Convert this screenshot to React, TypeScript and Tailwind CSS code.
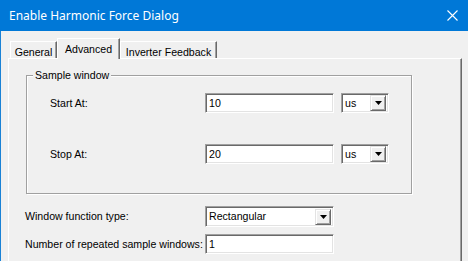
const sunken =
  'border-t border-l border-t-[#a0a0a0] border-l-[#a0a0a0] border-b border-r border-b-white border-r-white shadow-[inset_1px_1px_0_#696969,inset_-1px_-1px_0_#e3e3e3] bg-white';

function TextBox({ value, className = '' }: { value: string; className?: string }) {
  return (
    <div className={`flex h-[20px] w-[129px] items-center pl-[3px] leading-[13px] ${sunken} ${className}`}>
      {value}
    </div>
  );
}

function DropButton() {
  return (
    <div className="ml-auto mr-[2px] flex h-[16px] w-[16px] items-center justify-center border border-t-[#e3e3e3] border-l-[#e3e3e3] border-b-[#696969] border-r-[#696969] bg-[#f0f0f0] shadow-[inset_1px_1px_0_#fff,inset_-1px_-1px_0_#a0a0a0]">
      <svg width="7" height="4" viewBox="0 0 7 4">
        <path d="M0 0h7L3.5 4z" fill="#000" />
      </svg>
    </div>
  );
}

function Combo({ value, width, height = 20 }: { value: string; width: number; height?: number }) {
  return (
    <div
      className={`flex items-center pl-[3px] leading-[13px] ${sunken} ${width === 48 ? 'w-[48px]' : 'w-[129px]'} ${height === 21 ? 'h-[21px]' : 'h-[20px]'}`}
    >
      <span>{value}</span>
      <DropButton />
    </div>
  );
}

function Tab({ label, active, width }: { label: string; active?: boolean; width: string }) {
  return (
    <div
      className={`flex items-start justify-center whitespace-nowrap border-t border-l border-t-white border-l-white border-r border-r-[#696969] shadow-[inset_-1px_0_0_#a0a0a0] ${width} ${
        active
          ? 'relative z-10 -mb-px h-[21px] bg-[#f0f0f0] pt-[4px]'
          : 'h-[17px] pt-[4px]'
      }`}
    >
      {label}
    </div>
  );
}

export default function App() {
  return (
    <div className="h-[261px] w-[468px] overflow-hidden bg-[#f0f0f0] font-['Liberation_Sans',Arial,sans-serif] text-[10.6px] leading-[13px] text-black">
      {/* Title bar */}
      <div className="flex h-[31px] items-center justify-between bg-[#0078d7] pl-[9px] pr-[9px] font-['Noto_Sans',sans-serif] text-[12px] text-white">
        <span>Enable Harmonic Force Dialog</span>
        <svg width="11" height="11" viewBox="0 0 11 11" className="mr-[1px]">
          <path d="M0.5 0.5l10 10M10.5 0.5l-10 10" stroke="#fff" strokeWidth="1.1" />
        </svg>
      </div>

      <div className="h-[230px] border-l border-l-[#1a82d6] pl-[7px] pt-[7px]">
        {/* Tabs */}
        <div className="flex h-[20px] items-end pl-[2px]">
          <Tab label="General" width="w-[47px]" />
          <Tab label="Advanced" width="w-[63px]" active />
          <Tab label="Inverter Feedback" width="w-[97px]" />
        </div>

        {/* Tab page */}
        <div className="h-[210px] w-[454px] border-t border-l border-t-white border-l-white border-r border-r-[#696969] pl-[17px] pt-[16px] shadow-[inset_-1px_0_0_#a0a0a0]">
          <div className="relative h-[119px] w-[386px] border border-[#a0a0a0] pl-[23px] pt-[17px] shadow-[inset_1px_1px_0_#fff,1px_1px_0_#fff]">
            <span className="absolute left-[6px] top-[-7px] bg-[#f0f0f0] px-[2px]">Sample window</span>
            <div className="flex items-center">
              <span className="w-[155px]">Start At:</span>
              <TextBox value="10" />
              <div className="ml-[7px]">
                <Combo value="us" width={48} />
              </div>
            </div>
            <div className="mt-[31px] flex items-center">
              <span className="w-[155px]">Stop At:</span>
              <TextBox value="20" />
              <div className="ml-[7px]">
                <Combo value="us" width={48} />
              </div>
            </div>
          </div>

          <div className="-ml-px mt-[12px] flex items-center">
            <span className="w-[180px] whitespace-nowrap">Window function type:</span>
            <Combo value="Rectangular" width={129} height={21} />
          </div>
          <div className="-ml-px mt-[7px] flex items-center">
            <span className="w-[180px] shrink-0 whitespace-nowrap">Number of repeated sample windows:</span>
            <TextBox value="1" />
          </div>
        </div>
      </div>
    </div>
  );
}
